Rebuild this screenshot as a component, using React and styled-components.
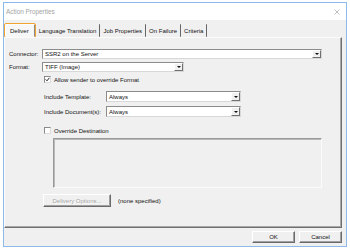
import React from "react";
import styled, { createGlobalStyle } from "styled-components";

const GlobalStyle = createGlobalStyle`
  html, body {
    margin: 0;
    padding: 0;
    background: #ffffff;
  }
  body {
    font-family: "Liberation Sans", Arial, sans-serif;
    font-size: 6px;
    color: #111;
  }
`;

const Window = styled.div`
  box-sizing: border-box;
  margin: 2px 0 0 3px;
  width: 344px;
  height: 245px;
  border: 1px solid #8cbbe9;
  display: flex;
  flex-direction: column;
  background: #f0f0f0;
`;

const TitleBar = styled.div`
  height: 17px;
  flex: none;
  background: #ffffff;
  display: flex;
  align-items: center;
  justify-content: space-between;
  padding: 0 6px 0 2px;
  font-size: 6.4px;
  color: #a3a3a3;
`;

const Body = styled.div`
  flex: 1;
  display: flex;
  flex-direction: column;
`;

const TabStrip = styled.div`
  display: flex;
  align-items: stretch;
  height: 13px;
  margin-top: 4px;
  padding-left: 1px;
`;

const Tab = styled.div`
  display: flex;
  align-items: center;
  padding: ${(p) => (p.active ? "0 5px 0 4px" : "0 3px")};
  border-right: 1px solid ${(p) => (p.active ? "#8a8a8a" : "#666")};
  background: ${(p) => (p.active ? "#f7f7f7" : "transparent")};
  border-left: ${(p) => (p.active ? "1px solid #fff" : "none")};
  border-top: ${(p) => (p.active ? "1px solid #fff" : "none")};
  outline: ${(p) => (p.active ? "1.5px solid #f2a431" : "none")};
  border-radius: 1px;
  margin-right: ${(p) => (p.active ? "1px" : "0")};
  white-space: nowrap;
`;

const Panel = styled.div`
  box-sizing: border-box;
  height: 191px;
  margin-right: 4px;
  border-top: 1px solid #fbfbfb;
  border-left: 1px solid #fbfbfb;
  border-right: 1px solid #6f6f6f;
  border-bottom: 1px solid #6f6f6f;
  box-shadow: inset -1px -1px 0 #a8a8a8;
  display: flex;
  flex-direction: column;
  padding-left: 4px;
`;

const Row = styled.div`
  display: flex;
  align-items: center;
  height: ${(p) => p.h || 10}px;
  margin-top: ${(p) => p.top || 0}px;
  margin-left: ${(p) => p.indent || 0}px;
`;

const Label = styled.div`
  width: ${(p) => p.w}px;
  flex: none;
  white-space: nowrap;
`;

const Note = styled.span`
  margin-left: 7px;
`;

const SelectBox = styled.div`
  box-sizing: border-box;
  width: ${(p) => p.w}px;
  height: 100%;
  background: #fff;
  border-top: 1px solid #8c8c8c;
  border-left: 1px solid #8c8c8c;
  border-right: 1px solid #d8d8d8;
  border-bottom: 1px solid #d8d8d8;
  display: flex;
  align-items: stretch;
  justify-content: space-between;
`;

const SelectText = styled.span`
  display: flex;
  align-items: center;
  padding-left: 2px;
`;

const ArrowButton = styled.div`
  box-sizing: border-box;
  width: 9px;
  background: #f0f0f0;
  border-top: 1px solid #fff;
  border-left: 1px solid #fff;
  border-right: 1px solid #707070;
  border-bottom: 1px solid #707070;
  display: flex;
  align-items: center;
  justify-content: center;
`;

const Triangle = styled.div`
  width: 0;
  height: 0;
  border-left: 2px solid transparent;
  border-right: 2px solid transparent;
  border-top: 2px solid #111;
`;

const Check = styled.div`
  box-sizing: border-box;
  width: 7px;
  height: 7px;
  flex: none;
  background: #fff;
  border-top: 1px solid #8a8a8a;
  border-left: 1px solid #8a8a8a;
  border-right: 1px solid #dcdcdc;
  border-bottom: 1px solid #dcdcdc;
  margin-right: 3px;
  display: flex;
  align-items: center;
  justify-content: center;
`;

const DestBox = styled.div`
  box-sizing: border-box;
  width: 269px;
  height: 50px;
  margin-top: 3px;
  margin-left: 44px;
  border-top: 1px solid #9a9a9a;
  border-left: 1px solid #9a9a9a;
  border-right: 1px solid #fbfbfb;
  border-bottom: 1px solid #fbfbfb;
  box-shadow: inset 1px 1px 0 #b9b9b9;
`;

const Button = styled.div`
  box-sizing: border-box;
  width: ${(p) => p.w}px;
  height: ${(p) => p.h || 12}px;
  flex: none;
  display: flex;
  align-items: center;
  justify-content: center;
  background: #f0f0f0;
  border-top: 1px solid #fff;
  border-left: 1px solid #fff;
  border-right: 1px solid #6a6a6a;
  border-bottom: 1px solid #6a6a6a;
  box-shadow: inset -1px -1px 0 #a0a0a0;
  color: ${(p) => (p.disabled ? "#a4a4a4" : "#111")};
  text-shadow: ${(p) => (p.disabled ? "1px 1px 0 #fff" : "none")};
`;

const Footer = styled.div`
  display: flex;
  justify-content: flex-end;
  gap: 4px;
  padding: 3px 4px 0 0;
`;

function Select({ w, value }) {
  return (
    <SelectBox w={w}>
      <SelectText>{value}</SelectText>
      <ArrowButton>
        <Triangle />
      </ArrowButton>
    </SelectBox>
  );
}

function CheckMark() {
  return (
    <svg width="5" height="5" viewBox="0 0 5 5">
      <path d="M0.6 2.4 L2 3.8 L4.4 0.8" stroke="#222" strokeWidth="1" fill="none" />
    </svg>
  );
}

export default function App() {
  return (
    <>
      <GlobalStyle />
      <Window>
        <TitleBar>
          <span>Action Properties</span>
          <svg width="6" height="6" viewBox="0 0 6 6">
            <path d="M0.5 0.5 L5.5 5.5 M5.5 0.5 L0.5 5.5" stroke="#b0b0b0" strokeWidth="0.8" />
          </svg>
        </TitleBar>
        <Body>
          <TabStrip>
            <Tab active>Deliver</Tab>
            <Tab>Language Translation</Tab>
            <Tab>Job Properties</Tab>
            <Tab>On Failure</Tab>
            <Tab>Criteria</Tab>
          </TabStrip>
          <Panel>
            <Row top={11}>
              <Label w={33}>Connector:</Label>
              <Select w={280} value="SSR2 on the Server" />
            </Row>
            <Row top={3}>
              <Label w={33}>Format:</Label>
              <Select w={142} value="TIFF (Image)" />
            </Row>
            <Row top={3} h={9} indent={35}>
              <Check>
                <CheckMark />
              </Check>
              <span>Allow sender to override Format</span>
            </Row>
            <Row top={7} h={11} indent={35}>
              <Label w={62}>Include Template:</Label>
              <Select w={135} value="Always" />
            </Row>
            <Row top={4} h={11} indent={35}>
              <Label w={62}>Include Document(s):</Label>
              <Select w={135} value="Always" />
            </Row>
            <Row top={9} h={9} indent={35}>
              <Check />
              <span>Override Destination</span>
            </Row>
            <DestBox />
            <Row top={6} h={13} indent={34}>
              <Button w={68} h={13} disabled>
                Delivery Options...
              </Button>
              <Note>(none specified)</Note>
            </Row>
          </Panel>
          <Footer>
            <Button w={43}>OK</Button>
            <Button w={43}>Cancel</Button>
          </Footer>
        </Body>
      </Window>
    </>
  );
}
